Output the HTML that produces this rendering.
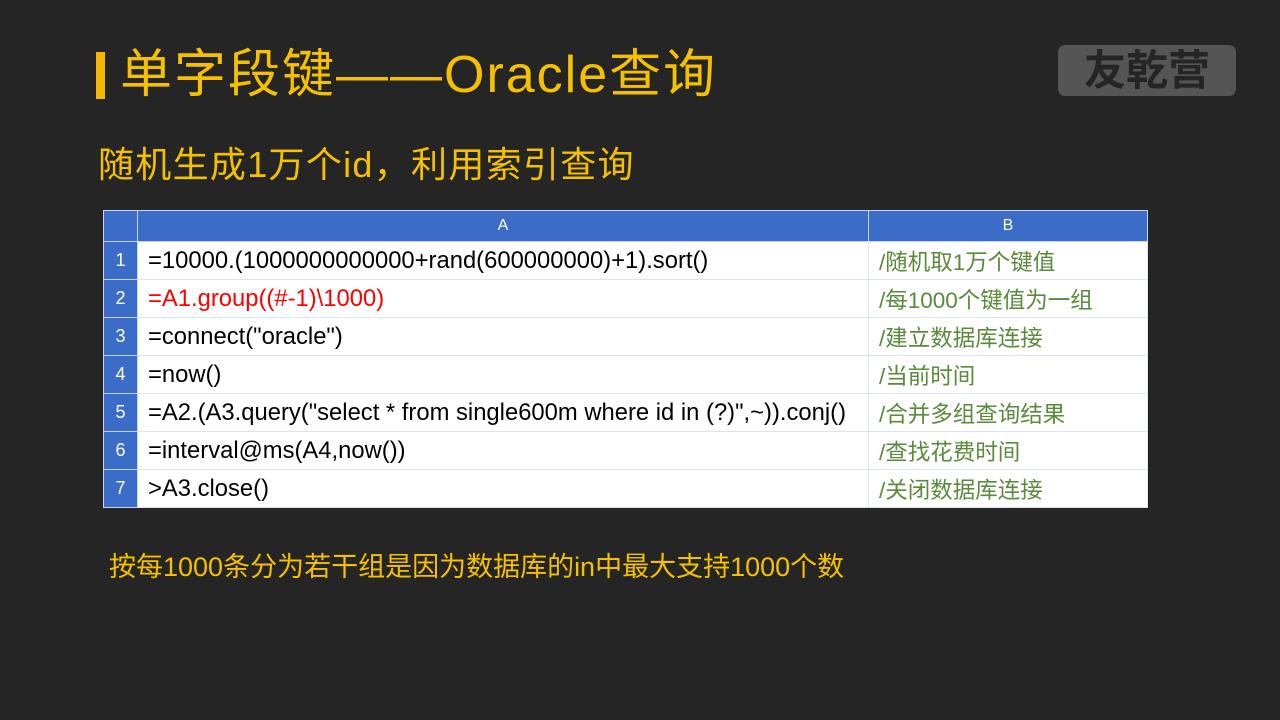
<!DOCTYPE html>
<html><head><meta charset="utf-8"><style>
body{margin:0;width:1280px;height:720px;background:#252525;position:relative;overflow:hidden;font-family:"Liberation Sans","Noto Sans CJK SC",sans-serif}
.bar{position:absolute;left:96px;top:52px;width:9px;height:47px;background:#f5b800}
.t1{position:absolute;left:120px;top:44px;font-size:52px;color:#f5c000;line-height:62px;white-space:nowrap;letter-spacing:2px}
.t2{position:absolute;left:98px;top:142px;font-size:36px;color:#f5c000;line-height:46px;white-space:nowrap;letter-spacing:1.3px}
.logo{position:absolute;left:1058px;top:45px;width:178px;height:51px;background:#555;border-radius:7px;color:#252525;font-size:42px;font-weight:bold;text-align:center;line-height:51px}
table{position:absolute;left:103px;top:210px;border-collapse:collapse;background:#fff}
td{border:1px solid #dbe5f1;height:38px;padding:1px 0 0 10px;box-sizing:border-box;white-space:nowrap}
tr.h td{background:#3b6cc8;color:#fff;text-align:center;font-size:16px;height:31px;border-color:#c6d4ec;padding:0}
td.n{background:#3b6cc8;color:#fff;text-align:center;width:34px;padding:0;font-size:18px;border-color:#c6d4ec}
td.a{width:731px;color:#000;font-size:23.8px}
td.b{width:279px;color:#5a8a3a;font-size:22.5px;padding-top:0}
.foot{position:absolute;left:109px;top:545px;font-size:27px;color:#f5c000;white-space:nowrap}
</style></head><body>
<div class="bar"></div>
<div class="t1">单字段键——Oracle查询</div>
<div class="logo">友乾营</div>
<div class="t2">随机生成1万个id，利用索引查询</div>
<table>
<tr class="h"><td style="width:34px"></td><td>A</td><td>B</td></tr>
<tr><td class="n">1</td><td class="a">=10000.(1000000000000+rand(600000000)+1).sort()</td><td class="b">/随机取1万个键值</td></tr>
<tr><td class="n">2</td><td class="a" style="color:#f00">=A1.group((#-1)\1000)</td><td class="b">/每1000个键值为一组</td></tr>
<tr><td class="n">3</td><td class="a">=connect("oracle")</td><td class="b">/建立数据库连接</td></tr>
<tr><td class="n">4</td><td class="a">=now()</td><td class="b">/当前时间</td></tr>
<tr><td class="n">5</td><td class="a">=A2.(A3.query("select * from single600m where id in (?)",~)).conj()</td><td class="b">/合并多组查询结果</td></tr>
<tr><td class="n">6</td><td class="a">=interval@ms(A4,now())</td><td class="b">/查找花费时间</td></tr>
<tr><td class="n">7</td><td class="a">&gt;A3.close()</td><td class="b">/关闭数据库连接</td></tr>
</table>
<div class="foot">按每1000条分为若干组是因为数据库的in中最大支持1000个数</div>
</body></html>
